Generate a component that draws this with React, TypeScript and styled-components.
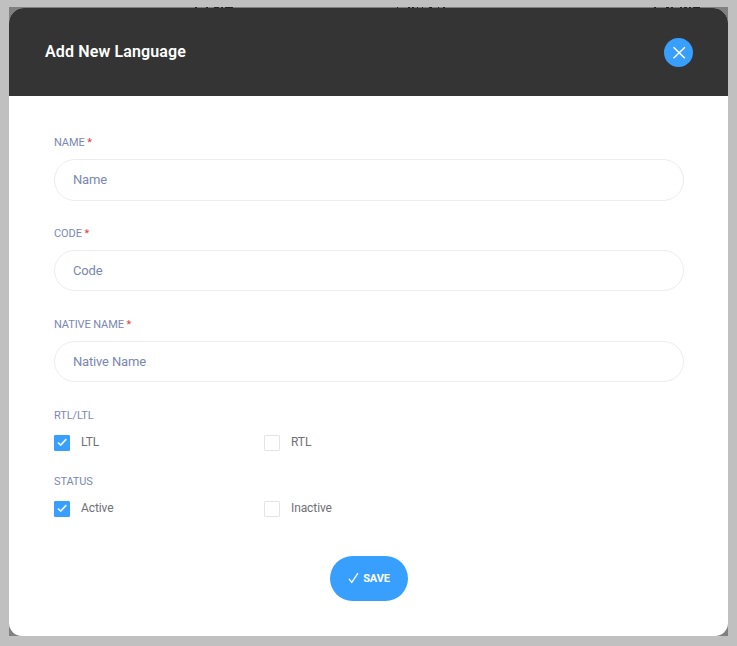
import React, { useState } from "react";
import styled, { createGlobalStyle } from "styled-components";

const GlobalStyle = createGlobalStyle`
  * { box-sizing: border-box; }
  body { margin: 0; background: #c0c0c0; font-family: Roboto, sans-serif; }
`;

const Page = styled.main`
  height: 646px;
  padding: 7px 9px 10px;
  background: #c0c0c0;
`;

const Backdrop = styled.div`
  height: 629px;
  background: #808080;
`;

const TableEdge = styled.div`
  display: flex;
  height: 1px;
  padding-left: 186px;
`;

const EdgeMark = styled.i<{ $width: number; $gap: number }>`
  width: ${(p) => p.$width}px;
  height: 1px;
  margin-right: ${(p) => p.$gap}px;
  background: #222;
`;

const Modal = styled.section`
  height: 628px;
  border-radius: 15px 15px 13px 13px;
  overflow: hidden;
  background: #fff;
`;

const Header = styled.header`
  display: flex;
  align-items: center;
  justify-content: space-between;
  height: 88px;
  padding: 0 35px 0 36px;
  background: #343434;
`;

const Title = styled.h1`
  margin: 0;
  color: #fff;
  font-size: 16px;
  line-height: 20px;
  font-weight: 600;
  letter-spacing: 0.13px;
`;

const CloseButton = styled.button`
  display: flex;
  align-items: center;
  justify-content: center;
  width: 29px;
  height: 29px;
  margin-top: 1px;
  padding: 0;
  border: 0;
  border-radius: 50%;
  background: #389fff;
`;

const Form = styled.form`
  padding: 39px 44px 0 45px;
`;

const Field = styled.div`
  height: 91px;
`;

const Label = styled.label`
  display: block;
  height: 24px;
  color: #7b88b0;
  font-size: 11px;
  line-height: 15px;
  letter-spacing: -0.1px;
  text-transform: uppercase;
`;

const Required = styled.span`
  color: #e33c3c;
`;

const Input = styled.input<{ $height: number }>`
  display: block;
  width: 100%;
  height: ${(p) => p.$height}px;
  padding: 0 18px ${(p) => p.$height - 41}px;
  border: 1px solid #ececec;
  border-radius: 21px;
  outline: 0;
  background: #fff;
  color: #7b88b0;
  font: 400 13px Roboto, sans-serif;
  letter-spacing: -0.17px;
  &::placeholder { color: #7b88b0; opacity: 1; }
`;

const OptionGroup = styled.div`
  height: 66px;
`;

const Options = styled.div`
  display: grid;
  grid-template-columns: 210px 210px;
  padding-top: 3px;
`;

const Option = styled.label`
  display: flex;
  align-items: center;
  gap: 11px;
  height: 16px;
  color: #6f7074;
  font-size: 12px;
  line-height: 16px;
  letter-spacing: -0.1px;
`;

const OptionText = styled.span`
  margin-top: -2px;
`;

const HiddenInput = styled.input`
  display: none;
`;

const CheckBox = styled.span<{ $checked: boolean }>`
  display: flex;
  align-items: center;
  justify-content: center;
  width: 16px;
  height: 16px;
  border: 1px solid ${(p) => (p.$checked ? "#389fff" : "#e4e4e4")};
  border-radius: 1px;
  background: ${(p) => (p.$checked ? "#389fff" : "#fff")};
`;

const Actions = styled.div`
  display: flex;
  justify-content: center;
  padding-top: 16px;
`;

const SaveButton = styled.button`
  display: flex;
  align-items: center;
  justify-content: center;
  gap: 4px;
  width: 78px;
  height: 45px;
  margin-right: 1px;
  padding: 0 0 0 1px;
  border: 0;
  border-radius: 22.5px;
  background: #389fff;
  color: #fff;
  font: 700 11px Roboto, sans-serif;
  letter-spacing: -0.15px;

  svg { margin-bottom: 2px; }
`;

const fields = [
  { label: "Name", height: 42 },
  { label: "Code", height: 41 },
  { label: "Native Name", height: 41 },
];

function OptionSet({ label, choices }: { label: string; choices: string[] }) {
  const [selected, setSelected] = useState(choices[0]);
  return (
    <OptionGroup>
      <Label as="div">{label}</Label>
      <Options>
        {choices.map((choice) => (
          <Option key={choice}>
            <HiddenInput type="radio" name={label} checked={choice === selected} onChange={() => setSelected(choice)} />
            <CheckBox $checked={choice === selected}>
              {choice === selected && (
                <svg width="10" height="10" viewBox="0 0 10 10" fill="none" stroke="#e8f4ff" strokeWidth="1.7">
                  <path d="M0.9 4.5 3.7 7.1 9.3 1.1" />
                </svg>
              )}
            </CheckBox>
            <OptionText>{choice}</OptionText>
          </Option>
        ))}
      </Options>
    </OptionGroup>
  );
}

export default function App() {
  return (
    <>
      <GlobalStyle />
      <Page>
        <Backdrop>
          <TableEdge>
            <EdgeMark $width={2} $gap={9} />
            <EdgeMark $width={2} $gap={6} />
            <EdgeMark $width={5} $gap={2} />
            <EdgeMark $width={2} $gap={2} />
            <EdgeMark $width={8} $gap={164} />
            <EdgeMark $width={1} $gap={10} />
            <EdgeMark $width={2} $gap={2} />
            <EdgeMark $width={2} $gap={3} />
            <EdgeMark $width={1} $gap={4} />
            <EdgeMark $width={1} $gap={6} />
            <EdgeMark $width={3} $gap={6} />
            <EdgeMark $width={1} $gap={4} />
            <EdgeMark $width={2} $gap={209} />
            <EdgeMark $width={2} $gap={10} />
            <EdgeMark $width={3} $gap={2} />
            <EdgeMark $width={2} $gap={7} />
            <EdgeMark $width={2} $gap={2} />
            <EdgeMark $width={3} $gap={2} />
            <EdgeMark $width={2} $gap={2} />
            <EdgeMark $width={7} $gap={0} />
          </TableEdge>
          <Modal role="dialog" aria-labelledby="dialog-title">
            <Header>
              <Title id="dialog-title">Add New Language</Title>
              <CloseButton type="button" aria-label="Close">
                <svg width="15" height="14" viewBox="0 0 15 14" fill="none" stroke="#fff" strokeWidth="1.5">
                  <path d="m2.5 1.2 11.4 11M13.9 1.2 2.5 12.2" />
                </svg>
              </CloseButton>
            </Header>
            <Form onSubmit={(e) => e.preventDefault()}>
              {fields.map(({ label, height }) => (
                <Field key={label}>
                  <Label htmlFor={label}>
                    {label} <Required>*</Required>
                  </Label>
                  <Input id={label} placeholder={label} $height={height} />
                </Field>
              ))}
              <OptionSet label="RTL/LTL" choices={["LTL", "RTL"]} />
              <OptionSet label="Status" choices={["Active", "Inactive"]} />
              <Actions>
                <SaveButton>
                  <svg width="11" height="12" viewBox="0 0 11 12" fill="none" stroke="#fff" strokeWidth="1.3">
                    <path d="m1 6.8 2.8 3.6L10 1.2" />
                  </svg>
                  SAVE
                </SaveButton>
              </Actions>
            </Form>
          </Modal>
        </Backdrop>
      </Page>
    </>
  );
}
